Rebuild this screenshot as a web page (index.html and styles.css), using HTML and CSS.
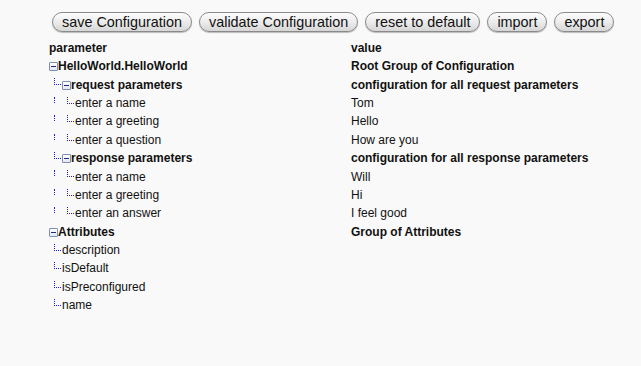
FILE: index.html
```html
<!DOCTYPE html>
<html>
<head>
    <meta name="viewport" content="width=device-width, initial-scale=1.0">
    <link rel="stylesheet" href="styles.css">
</head>
<body>
    <div class="toolbar">
        <button class="btn">save Configuration</button>
        <button class="btn">validate Configuration</button>
        <button class="btn">reset to default</button>
        <button class="btn">import</button>
        <button class="btn">export</button>
    </div>

    <div class="config-table">
        <div class="row head">
            <div class="param">parameter</div>
            <div class="value">value</div>
        </div>

        <div class="row group">
            <div class="param"><span class="toggle"></span>HelloWorld.HelloWorld</div>
            <div class="value">Root Group of Configuration</div>
        </div>

        <div class="row group">
            <div class="param"><span class="branch"></span><span class="toggle"></span>request parameters</div>
            <div class="value">configuration for all request parameters</div>
        </div>
        <div class="row">
            <div class="param"><span class="guide"></span><span class="branch"></span>enter a name</div>
            <div class="value">Tom</div>
        </div>
        <div class="row">
            <div class="param"><span class="guide"></span><span class="branch"></span>enter a greeting</div>
            <div class="value">Hello</div>
        </div>
        <div class="row">
            <div class="param"><span class="guide"></span><span class="branch"></span>enter a question</div>
            <div class="value">How are you</div>
        </div>

        <div class="row group">
            <div class="param"><span class="branch"></span><span class="toggle"></span>response parameters</div>
            <div class="value">configuration for all response parameters</div>
        </div>
        <div class="row">
            <div class="param"><span class="guide"></span><span class="branch"></span>enter a name</div>
            <div class="value">Will</div>
        </div>
        <div class="row">
            <div class="param"><span class="guide"></span><span class="branch"></span>enter a greeting</div>
            <div class="value">Hi</div>
        </div>
        <div class="row">
            <div class="param"><span class="guide"></span><span class="branch"></span>enter an answer</div>
            <div class="value">I feel good</div>
        </div>

        <div class="row group">
            <div class="param"><span class="toggle"></span>Attributes</div>
            <div class="value">Group of Attributes</div>
        </div>
        <div class="row">
            <div class="param"><span class="branch"></span>description</div>
            <div class="value"></div>
        </div>
        <div class="row">
            <div class="param"><span class="branch"></span>isDefault</div>
            <div class="value"></div>
        </div>
        <div class="row">
            <div class="param"><span class="branch"></span>isPreconfigured</div>
            <div class="value"></div>
        </div>
        <div class="row">
            <div class="param"><span class="branch"></span>name</div>
            <div class="value"></div>
        </div>
    </div>
</body>
</html>
```

FILE: styles.css
```css
body {
    font-family: "Liberation Sans", Arial, sans-serif;
    background-color: #f9f9f9;
    color: #111;
    margin: 0;
    padding: 0;
}

.toolbar {
    display: flex;
    gap: 7px;
    padding: 12px 0 0 52px;
}

.btn {
    font-family: "Liberation Sans", Arial, sans-serif;
    font-size: 14.4px;
    color: #111;
    height: 20px;
    line-height: 18px;
    padding: 0 9px;
    border: 1px solid #8a8a8a;
    border-radius: 10px;
    background: linear-gradient(#fdfdfd 0%, #ececec 50%, #d6d6d6 100%);
    box-shadow: 0 1px 1px rgba(0, 0, 0, 0.25);
    cursor: pointer;
}

.config-table {
    margin-top: 6px;
    font-size: 12px;
}

.row {
    display: flex;
    align-items: center;
    height: 18.4px;
}

.head {
    height: 19px;
}

.param {
    display: flex;
    align-items: center;
    align-self: stretch;
    width: 302px;
    padding-left: 49px;
    white-space: nowrap;
}

.value {
    white-space: nowrap;
}

.head,
.group {
    font-weight: bold;
}

.toggle {
    width: 9px;
    height: 9px;
    box-sizing: border-box;
    border: 1px solid #7d8fb5;
    border-radius: 1px;
    background: linear-gradient(#ffffff, #e4e8f0);
    position: relative;
    margin-top: 1px;
}

.toggle::after {
    content: "";
    position: absolute;
    left: 1px;
    top: 3px;
    width: 5px;
    height: 1px;
    background-color: #1c2a80;
}

.guide,
.branch {
    width: 13px;
    align-self: stretch;
    position: relative;
    flex-shrink: 0;
}

.guide::before {
    content: "";
    position: absolute;
    left: 5px;
    top: 3px;
    height: 6px;
    border-left: 1px dotted #1a1ae0;
}

.branch::before {
    content: "";
    position: absolute;
    left: 5px;
    top: 3px;
    width: 6px;
    height: 6px;
    border-left: 1px dotted #1a1ae0;
    border-bottom: 1px dotted #1a1ae0;
}
```
